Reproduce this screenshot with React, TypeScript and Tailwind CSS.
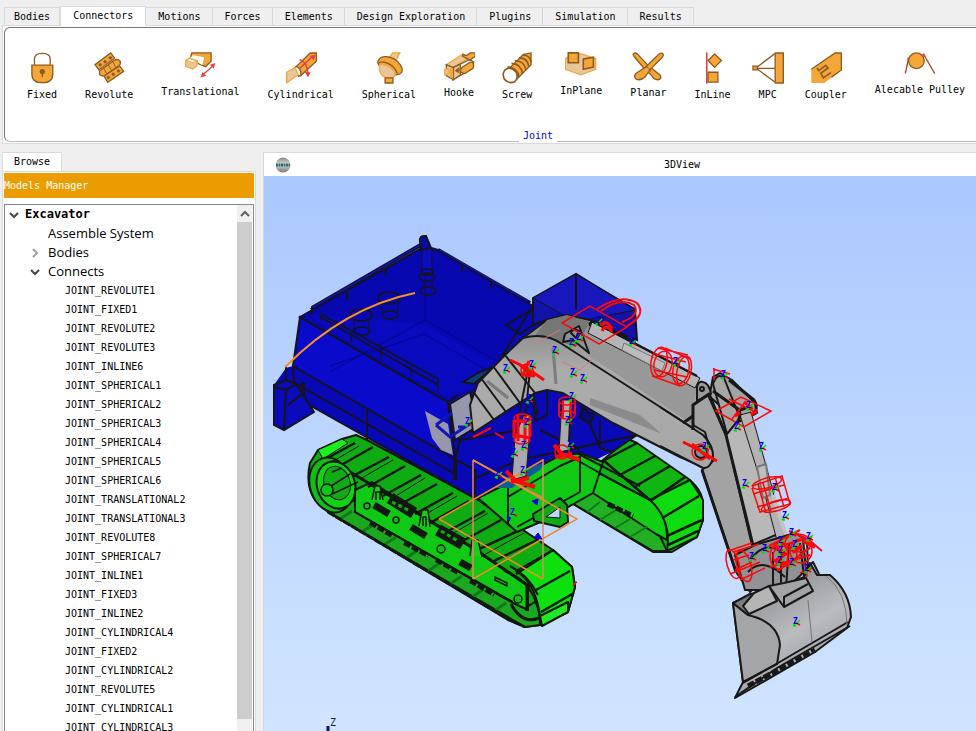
import React from 'react';

const GOLD = '#f4a638';
const BROWN = '#8d5b20';
const TAN = '#e9c59c';
const RED = '#e04545';

const tabs = ['Bodies', 'Connectors', 'Motions', 'Forces', 'Elements', 'Design Exploration', 'Plugins', 'Simulation', 'Results'];

const joints = [
  'REVOLUTE1', 'FIXED1', 'REVOLUTE2', 'REVOLUTE3', 'INLINE6', 'SPHERICAL1', 'SPHERICAL2', 'SPHERICAL3',
  'SPHERICAL4', 'SPHERICAL5', 'SPHERICAL6', 'TRANSLATIONAL2', 'TRANSLATIONAL3', 'REVOLUTE8', 'SPHERICAL7',
  'INLINE1', 'FIXED3', 'INLINE2', 'CYLINDRICAL4', 'FIXED2', 'CYLINDRICAL2', 'REVOLUTE5', 'CYLINDRICAL1',
  'CYLINDRICAL3',
];

interface Tool {
  label: string;
  height: number;
  art: React.ReactNode;
}

// Every icon is drawn on a grid of three units to the pixel, 96 units wide
const tools: Tool[] = [
  {
    label: 'Fixed',
    height: 32,
    art: (
      <>
        <path d="M26 38V20Q26 3 50 3T74 20V38" fill="none" />
        <path d="M18 39H82V66Q82 93 50 93T18 66Z" />
        <circle cx="50" cy="59" r="6" fill={BROWN} />
        <path d="M50 60V75" />
      </>
    ),
  },
  {
    label: 'Revolute',
    height: 32,
    art: (
      <>
        <path d="M54 2L66 18L18 54L6 38Z" />
        <path d="M82 42L94 58L45 92L33 72Z" />
        <path d="M20 57L64 25Q76 18 83 27Q86 36 78 42L36 71Q24 74 20 67Z" />
        <path d="M33 49L42 66M47 39L57 56M61 29L70 46" strokeWidth="3" />
        <g fill={BROWN} strokeWidth="2">
          <circle cx="22" cy="38" r="4" />
          <circle cx="37" cy="29" r="4" />
          <circle cx="53" cy="17" r="4" />
          <circle cx="47" cy="77" r="4" />
          <circle cx="62" cy="67" r="4" />
          <circle cx="78" cy="57" r="4" />
        </g>
      </>
    ),
  },
  {
    label: 'Translational',
    height: 29,
    art: (
      <>
        <path d="M24 2H83V27L66 44L46 36L20 16Z" />
        <path d="M27 9L62 15L56 39L40 30L18 18Z" fill="#fff" stroke="none" />
        <path d="M17 18L41 26L39 42L27 51L5 43V25Z" fill={TAN} stroke={GOLD} />
        <path d="M17 19L40 27L26 32L8 25Z" fill="#fff" stroke={GOLD} strokeWidth="3" />
        <path d="M56 70L92 39" stroke={RED} />
        <path d="M96 33L79 38L91 50ZM50 77L57 60L68 72Z" fill={RED} stroke="none" />
      </>
    ),
  },
  {
    label: 'Cylindrical',
    height: 32,
    art: (
      <>
        <path d="M77 2H96V27L48 72Q31 67 31 47Z" />
        <path d="M34 43Q49 48 49 69L42 74L28 51Z" fill="#fff" />
        <path d="M5 61L31 46L40 69L5 93Z" fill={TAN} stroke={GOLD} />
        <path d="M45 49L85 12M45 22Q67 27 71 69" fill="none" stroke={RED} strokeWidth="5" />
        <path d="M94 7L75 11L88 24ZM60 59L79 62L70 76Z" fill={RED} stroke="none" />
      </>
    ),
  },
  {
    label: 'Spherical',
    height: 32,
    art: (
      <>
        <path d="M60 2H82L70 26L48 18Z" fill={TAN} stroke={GOLD} />
        <path d="M15 28Q20 12 42 13Q66 15 82 36Q94 53 87 62Q82 68 70 69L30 50Q13 40 15 28Z" />
        <path d="M16 34Q26 24 46 34Q66 43 75 66" fill="none" />
        <path d="M20 38Q44 34 62 54Q70 65 66 74Q58 79 45 78Q30 77 23 63Q17 50 20 38Z" fill={TAN} stroke={GOLD} />
        <path d="M37 78H61V94H37Z" />
      </>
    ),
  },
  {
    label: 'Hooke',
    height: 30,
    art: (
      <>
        <path d="M10 38L61 5L80 17L31 47Z" fill={TAN} stroke={GOLD} />
        <path d="M31 47L82 22L94 30L90 50L31 84Z" fill="#fff" />
        <path d="M31 47L53 36V70L31 84Z" fill={TAN} />
        <path d="M10 38L32 47V84L11 72Z" fill={TAN} />
        <path d="M61 6L72 10L84 2H98V13L82 24L60 12Z" />
        <path d="M59 46L82 31Q97 27 93 48L69 64Q52 66 53 53Z" />
        <path d="M37 56L48 47V63Z" fill={BROWN} strokeWidth="2" />
        <path d="M21 47V76L31 82V50Z" stroke="none" />
        <path d="M5 52L15 50L20 64L6 70Z" fill={TAN} stroke={GOLD} />
      </>
    ),
  },
  {
    label: 'Screw',
    height: 32,
    art: (
      <>
        <path d="M69 6L92 2V38L44 87L8 66Z" />
        <path d="M65 9Q88 7 92 29M55 17Q82 17 85 43M42 25Q72 26 76 53M32 34Q61 35 66 65M20 44Q52 47 55 76" fill="none" strokeWidth="5" />
        <path d="M12 54Q26 40 45 59Q56 76 42 90Q24 98 10 82Q3 66 12 54Z" fill="#fff" strokeWidth="5" />
      </>
    ),
  },
  {
    label: 'InPlane',
    height: 28,
    art: (
      <>
        <path d="M1 19L47 4L94 19V52L48 69L1 52Z" fill={TAN} stroke={GOLD} />
        <path d="M10 2H41V32H10ZM56 21L87 15V45L56 52Z" strokeWidth="5" />
      </>
    ),
  },
  {
    label: 'Planar',
    height: 30,
    art: (
      <>
        <path d="M5 4Q12 -1 19 8L49 40L87 71Q91 84 79 84Q66 84 61 72L36 48L9 16Q1 7 5 4Z" />
        <path d="M93 3Q100 8 90 18L59 49L40 75Q29 87 14 83Q3 76 12 65L42 45L75 13Q86 0 93 3Z" />
        <path d="M42 43Q54 48 57 59" fill="none" strokeWidth="3" />
      </>
    ),
  },
  {
    label: 'InLine',
    height: 32,
    art: (
      <>
        <path d="M30 0V96" stroke={RED} strokeWidth="5" />
        <path d="M54 5L75 25L54 46L34 25ZM34 61H64V91H34Z" />
      </>
    ),
  },
  {
    label: 'MPC',
    height: 32,
    art: (
      <>
        <path d="M13 47L70 4M13 49L70 91M13 49H70" />
        <path d="M3 42H16V54H3ZM71 2H96V94H71Z" />
      </>
    ),
  },
  {
    label: 'Coupler',
    height: 32,
    art: (
      <>
        <path d="M77 2H97V54L44 94H4V52Z" stroke="none" />
        <path d="M4 52L77 2H96V54L66 76" fill="none" />
        <path d="M21 48L27 56L48 40L55 48L33 64L41 78L64 62" fill="none" strokeWidth="5" />
      </>
    ),
  },
  {
    label: 'Alecable Pulley',
    height: 27,
    art: (
      <>
        <path d="M14 19L4 65M61 8L94 65" />
        <path d="M14 19L4 65M61 8L94 65" stroke={RED} strokeWidth="3" strokeDasharray="8 12" />
        <circle cx="38" cy="26" r="24" />
        <circle cx="14" cy="20" r="4" fill={RED} stroke="none" />
        <circle cx="60" cy="9" r="5" fill={RED} stroke="none" />
      </>
    ),
  },
];

const markers = [
  [506, 369], [532, 365], [529, 399], [555, 351], [572, 343], [579, 338], [598, 321], [632, 342], [573, 373],
  [583, 379], [572, 397], [676, 362], [568, 421], [570, 445], [527, 423], [524, 446], [514, 453], [523, 471],
  [498, 474], [705, 447], [468, 422], [513, 513], [724, 375], [749, 406], [737, 427], [762, 447], [745, 484],
  [775, 488], [785, 516], [792, 533], [809, 537], [781, 541], [795, 545], [765, 549], [752, 557], [781, 551],
  [780, 561], [792, 563], [807, 569], [796, 622],
];

const ToolIcon = ({ height, art }: { height: number; art: React.ReactNode }) => (
  <svg
    width="32"
    height={height}
    viewBox={`0 0 98 ${height * 3}`}
    className="shrink-0"
    fill={GOLD}
    stroke={BROWN}
    strokeWidth="4"
    aria-hidden="true"
  >
    {art}
  </svg>
);

const Chevron = ({ d, color = '#444' }: { d: string; color?: string }) => (
  <svg width="10" height="10" viewBox="0 0 10 10" fill="none" stroke={color} strokeWidth="2" className="shrink-0" aria-hidden="true">
    <path d={d} />
  </svg>
);

const Ribbon = () => (
  <header className="pt-1.5">
    <nav className="flex items-end pl-1" role="tablist">
      {tabs.map((tab) =>
        tab === 'Connectors' ? (
          <button key={tab} role="tab" aria-selected="true" className="-mb-px h-5 border border-b-0 border-[#dadada] bg-white px-3 pb-0.5">
            {tab}
          </button>
        ) : (
          <button key={tab} role="tab" aria-selected="false" className="h-[18px] border-t border-r border-[#dadada] bg-[#efefef] pr-[11px] pl-3 first:border-l first:px-[9px]">
            {tab}
          </button>
        ),
      )}
    </nav>
    <div className="ml-0.5 overflow-hidden border border-r-0 border-[#dadada] bg-white py-px pl-px">
      <div className="-mr-24 flex h-[115px] flex-col rounded-md border border-[#b9b9b9] border-t-[#777] border-l-[#777]">
        <div className="flex items-start gap-7 pt-6 pl-[22px]">
          {tools.map((tool) => (
            <button key={tool.label} className="flex shrink-0 flex-col items-center gap-[5px] whitespace-nowrap">
              <span className="flex w-0 justify-center">
                <ToolIcon height={tool.height} art={tool.art} />
              </span>
              {tool.label}
            </button>
          ))}
        </div>
        <h2 className="mt-auto -mb-px self-center bg-white px-1 text-[#0000e0]">Joint</h2>
      </div>
    </div>
  </header>
);

const ModelTree = () => (
  <aside className="flex w-64 shrink-0 flex-col pl-0.5">
    <div role="tablist">
      <button role="tab" aria-selected="true" className="h-[19px] border border-b-0 border-[#dadada] bg-white px-[11px]">
        Browse
      </button>
    </div>
    <div className="flex min-h-0 flex-1 flex-col border border-b-0 border-[#dadada] bg-white px-px pt-px">
      <h1 className="flex h-[25px] shrink-0 items-center bg-[#eb9c00] text-white">Models Manager</h1>
      <div className="mt-1.5 flex min-h-0 flex-1 border border-b-0 border-[#828790]">
        <ul className="min-w-0 flex-1 overflow-hidden leading-[19px]" role="tree">
          <li className="flex items-center gap-1.5 pl-1 text-[12px] font-bold">
            <Chevron d="M1 3L5 7L9 3" />
            Excavator
          </li>
          <li className="pl-[43px] font-[Open_Sans,Noto_Sans,sans-serif] text-[13px]">Assemble System</li>
          <li className="flex items-center gap-2 pl-[25px] font-[Open_Sans,Noto_Sans,sans-serif] text-[13px]">
            <Chevron d="M3 1L7 5L3 9" color="#a0a0a0" />
            Bodies
          </li>
          <li className="flex items-center gap-2 pl-[25px] font-[Open_Sans,Noto_Sans,sans-serif] text-[13px]">
            <Chevron d="M1 3L5 7L9 3" />
            Connects
          </li>
          {joints.map((joint) => (
            <li key={joint} className="pl-[60px]">{`JOINT_${joint}`}</li>
          ))}
        </ul>
        <div className="mr-px flex w-[15px] shrink-0 flex-col bg-[#f0f0f0]">
          <button aria-label="Scroll up" className="flex h-[17px] shrink-0 items-center justify-center">
            <Chevron d="M1 7L5 3L9 7" color="#606060" />
          </button>
          <div className="mb-3 flex-1 bg-[#cdcdcd]" />
        </div>
      </div>
    </div>
  </aside>
);

const Marker = ({ x, y }: { x: number; y: number }) => (
  <g>
    <path d={`M${x} ${y + 1}l-3 3m2-2v3`} stroke="#00e000" strokeWidth="1.5" />
    <path d={`M${x} ${y + 1}l4 2`} stroke="#f00" strokeWidth="1.5" />
    <path d={`M${x + 1} ${y + 1}l3-3`} stroke="#00e000" strokeWidth="1.5" />
    <text x={x - 3} y={y + 2} fill="#0000ee" stroke="none" fontSize="8" fontWeight="bold">Z</text>
  </g>
);

const Body = () => (
  <g stroke="#14141a" strokeWidth="2">
    <path d="M300 317L425 246L438 250L533 306V298L576 274L635 308L637 435L612 452L575 470L475 498L295 397L274 425V385L286 368L293 366Z" fill="#0909b8" stroke="none" />
    <path d="M300 317L448 402L455 459L295 372L293 366Z" fill="#0a0acb" />
    <path d="M300 317L425 246L438 250L533 306L495 368L448 402Z" fill="#0808b0" />
    <path d="M306 313L424 324L514 375L448 398L345 340Z" fill="#0909bd" stroke="none" />
    <path d="M425 252V320L330 372M425 320L516 372M330 366L424 334L490 372" fill="none" stroke="#05058c" strokeWidth="1" />
    <path d="M312 308L424 243M438 250L530 303" fill="none" stroke="#10104a" strokeWidth="4" />
    <path d="M310 309L424 243M440 250L528 301" fill="none" stroke="#1717c4" strokeWidth="1" />
    <path d="M533 298L576 274L635 310L637 340L590 322L567 315L547 320L533 325Z" fill="#1212a8" />
    <path d="M533 298L576 322L635 310L576 274Z" fill="#1717bd" strokeWidth="1" />
    <path d="M576 274V310M506 325L533 309V325L520 334Z" fill="none" />
    <path d="M293 366L455 459L475 470V498L295 397Z" fill="#0808b4" />
    <path d="M295 383L455 474M367 410V440M455 459L460 440L520 430V500M475 478L520 460L637 435" fill="none" />
    <path d="M455 459V480M303 382V396" strokeWidth="4" />
    <path d="M274 385L286 380L296 384L314 412L284 430L274 425Z" fill="#0b0bbc" />
    <path d="M286 366V380M274 387L286 390L296 384M286 390L284 430M288 405L302 394" fill="none" />
    <path d="M321 313V318L323 315L438 379V391M351 331V342M381 348V359M411 366V376M322 318L438 385" fill="none" strokeWidth="1.5" />
    <path d="M347 292v8M386 269v6M462 264v8M491 281v8M312 307v8" fill="none" />
    <path d="M422 248V275H432V248" fill="#0b0bc2" strokeWidth="1" />
    <path d="M420 242Q419 235 426 236L431 248L421 250Z" fill="#0a0aa8" />
    <g fill="none" strokeWidth="1.5">
      <ellipse cx="427" cy="277" rx="8" ry="4" />
      <ellipse cx="427" cy="272" rx="6" ry="3" />
      <ellipse cx="428" cy="291" rx="8" ry="4" />
      <ellipse cx="389" cy="298" rx="11" ry="6" />
      <ellipse cx="390" cy="315" rx="8" ry="4" />
      <ellipse cx="361" cy="315" rx="11" ry="6" />
      <ellipse cx="362" cy="331" rx="8" ry="4" />
      <path d="M382 302V312M398 302V312M354 320V330M369 320V330M424 280V290M432 280V290" strokeWidth="1" />
    </g>
    <path d="M425 411L448 424L453 455L441 450L432 438Z" fill="#9696ad" stroke="none" />
    <path d="M450 404L470 392L478 426L455 440Z" fill="#9696ad" />
    <path d="M436 425L452 413M436 425L450 437L476 420M458 427h8" stroke="#1414b8" strokeWidth="3" fill="none" />
    <path d="M463 382L478 373L495 366L474 384Z" fill="#0a3f7a" />
    <path d="M533 393L535 421L547 415V392M582 405L600 448L612 452L637 435M600 448V420M540 430L580 450" fill="none" />
    <path d="M582 408L594 415L590 424L580 418Z" fill="#090978" />
  </g>
);

const Track = () => (
  <g stroke="#101810" strokeWidth="2" strokeLinejoin="round">
    <path d="M628 439L637 443L683 475Q703 488 703 505V520L697 537L672 552H653L570 502L593 470L603 460Z" fill="#0fb612" />
    <path d="M570 502L593 492L660 536L667 551H653Z" fill="#22ae25" />
    <path d="M593 470L650 500Q668 514 667 540L656 534L593 493Z" fill="#10ce12" />
    <path d="M650 500Q672 520 667 551L697 537L703 520V500L690 480Z" fill="#0edb10" />
    <path d="M603 460L650 500M637 443L603 461M655 456L618 476M670 466L636 486M685 477L652 500M699 496L664 517M702 520L667 536M668 545L698 531" fill="none" strokeWidth="2.5" />
    <path d="M587 512L600 502M600 520L616 510M615 528L630 519M630 537L647 527" stroke="#0b800e" />
    <path d="M608 504l25 12" strokeWidth="5" strokeDasharray="7 2" />

    <path d="M342 439L318 450L310 463Q305 485 315 500L328 512L508 620L525 627L540 625L568 612L575 587L572 567L553 550L475 498L367 440L356 435Z" fill="#0fab13" />
    <path d="M328 512L355 500L528 606L539 600L540 625L525 627Z" fill="#1ca720" />
    <path d="M340 519L352 511M362 532L374 524M384 545L396 537M406 558L418 550M428 571L440 563M450 584L462 576M472 597L484 589M494 611L506 603" stroke="#0f7a14" strokeWidth="3" />
    <path d="M355 490L372 482L528 585V610L513 603L355 512Z" fill="#10c914" />
    <path d="M318 450L342 439L348 443L323 459Z" fill="#1cee20" strokeWidth="1" />
    <path d="M516 571Q538 584 541 625L568 612L575 587L572 567L553 550Z" fill="#0ee010" />
    <path d="M540 616L568 602L568 612L542 626Z" fill="#20e824" />
    <path d="M355 443L322 461M373 447L336 468M389 457L351 477M405 466L368 487M421 475L383 496M437 484L399 505M453 493L415 514M469 501L430 523M485 511L446 532M501 520L461 542M520 530L477 550M537 540L492 562M553 550L516 574M570 571L536 590M574 593L541 612" fill="none" strokeWidth="2.5" />
    <path d="M359 446L330 463M393 460L360 479M425 478L391 499M457 496L421 517M488 513L452 534M524 533L482 556" fill="none" strokeWidth="1" />
    <path d="M322 459L350 472L390 496L473 548L530 587" fill="none" strokeWidth="3" />
    <path d="M328 512L508 619L525 627" fill="none" strokeWidth="3" strokeDasharray="8 1" />
    <ellipse cx="331" cy="485" rx="21" ry="28" transform="rotate(-18 331 485)" fill="#12bd18" />
    <ellipse cx="336" cy="485" rx="19" ry="24" transform="rotate(-18 336 485)" fill="#0fd413" />
    <ellipse cx="337" cy="483" rx="13" ry="17" transform="rotate(-18 337 483)" fill="#12ab18" strokeWidth="1" />
    <path d="M325 490L350 474M330 495L358 482M332 472L342 468" strokeWidth="1.5" />
    <circle cx="327" cy="490" r="6" fill="#12c418" strokeWidth="1.5" />
    <path d="M355 488V512L513 602" fill="none" />
    <path d="M390 498L414 513M438 530L463 544" strokeWidth="12" />
    <path d="M392 502L410 511M441 531L458 541" stroke="#14a81a" strokeWidth="3" strokeDasharray="4 3" />
    <path d="M374 505L389 514M411 527L426 536M460 562L471 568" strokeWidth="7" />
    <path d="M370 523l22 13M404 543l24 13M436 560l22 13M470 581l24 14" strokeWidth="4" strokeDasharray="7 2" />
    <path d="M372 500L375 486H380L383 500M419 526L422 510H428L430 527M470 556L472 540H478L482 557M376 500V492H380V500M423 526V517H426V527" fill="#1acc20" strokeWidth="1.5" />
    <g fill="#10be16" strokeWidth="1.5">
      <circle cx="367" cy="506" r="3" />
      <circle cx="396" cy="520" r="3" />
      <circle cx="441" cy="549" r="4" />
      <circle cx="518" cy="599" r="4" />
      <path d="M495 577L507 583V586L495 580Z" />
    </g>
    <path d="M504 571Q534 580 540 618M510 566Q528 575 538 595" fill="none" />
    <path d="M527 585V611M511 604Q522 625 539 618" fill="none" strokeWidth="3" />
  </g>
);

const Chassis = () => (
  <g stroke="#101810" strokeWidth="2" strokeLinejoin="round">
    <path d="M478 498L508 483L557 457L580 453L603 462L593 493L545 520L517 532Z" fill="#10c914" />
    <path d="M508 483V525M508 497L560 466L580 457V492M517 527L580 492" fill="none" />
    <path d="M575 452L640 486M575 459L628 489" fill="none" />
    <path d="M533 514L560 498L567 505L568 522L560 527L534 521Z" fill="#10aa18" />
    <path d="M546 517L560 507V518Z" fill="#bdd6fb" strokeWidth="1" />
    <path d="M495 488L510 475L545 462L540 470L512 488Z" fill="#0c5c98" stroke="none" />
  </g>
);

const Boom = () => (
  <g stroke="#181818" strokeWidth="2" strokeLinejoin="round">
    <path d="M515 436L524 415H531L526 476L512 480Z" fill="#a8a8ae" strokeWidth="1" />
    <path d="M562 400H572L569 450L559 452Z" fill="#a8a8ae" strokeWidth="1" />
    <path d="M473 433L470 405L478 383L505 355L523 338L547 320L567 315L590 320L697 383L705 430Q719 452 713 461L707 468L680 457L613 423L563 393L547 390L535 393L513 407Z" fill="url(#boomShade)" />
    <path d="M547 320L567 315L590 322L576 347L555 340L535 336Z" fill="#777" stroke="none" />
    <path d="M590 322L697 383L693 425L588 355Z" fill="#989898" stroke="none" />
    <path d="M523 338Q545 332 562 344L693 428" fill="none" />
    <path d="M590 398L640 415L662 434L590 405Z" fill="#8b8b8d" stroke="none" />
    <path d="M505 355L535 393M493 366L520 403M481 378L506 412M472 390L494 420" fill="none" />
    <path d="M487 381L508 398M553 348L556 384" stroke="#7c7c7c" strokeWidth="3" />
    <path d="M563 342L565 334L579 326L589 353L573 340Z" fill="#929292" />
    <path d="M592 322L700 378L695 388L588 333Z" fill="#b5b5b8" strokeWidth="1" />
    <path d="M592 321L697 376" strokeWidth="2.5" />
    <path d="M624 343L665 363L662 371L622 350Z" fill="#bcbcbf" stroke="#777" strokeWidth="1" />
    <path d="M571 333Q573 327 579 331L576 338ZM590 326Q588 320 600 321" fill="none" />
    <path d="M518 420L528 370M530 370L525 420M571 397L569 442" fill="none" />
    <path d="M533 394L537 415" strokeWidth="3" />
  </g>
);

const Stick = () => (
  <g stroke="#181818" strokeWidth="2" strokeLinejoin="round">
    <path d="M693 405L710 393L713 377L720 373L732 380L755 403L757 413L750 417L778 533L780 560L750 592L736 572L702 470L713 461L705 432L693 425Z" fill="#a3a3a3" />
    <path d="M708 395L726 435L752 545L778 534L750 417L738 422Z" fill="#b7b8b7" />
    <path d="M697 401V387Q698 381 703 382Q709 383 711 394Z" fill="#999" />
    <path d="M713 384Q717 372 724 378L740 418L727 434Z" fill="#a6a6a6" />
    <path d="M726 435L759 570L748 590M702 470L736 572M693 430V405L709 394L726 435" fill="none" strokeWidth="3" />
    <path d="M740 415L751 412L770 480L787 545L780 552L765 495Z" fill="#b3b3b5" strokeWidth="1" />
    <path d="M757 467L766 464L770 495L763 498Z" fill="#bdbdc0" stroke="#777" />
    <path d="M773 495L789 545" stroke="#c2c2c6" strokeWidth="4" />
    <circle cx="702" cy="389" r="2" />
    <path d="M713 391L738 409Q742 414 738 421M729 380L754 400Q758 406 755 412M740 410L752 406" fill="none" strokeWidth="3" />
    <path d="M660 414L703 443Q714 450 713 458Q710 469 703 468L660 446Z" fill="#a8a8a9" stroke="none" />
    <path d="M660 407L703 435Q714 446 713 458Q710 469 703 468L660 446" fill="none" />
    <path d="M683 423L693 416" fill="none" strokeWidth="3" />
    <circle cx="701" cy="452" r="6" fill="#8e8e8e" />
    <path d="M735 555L755 545L795 533L803 538L806 570L785 590L745 590Z" fill="#929296" />
    <path d="M752 558Q765 540 783 553M748 572Q763 556 785 577M773 552V586M781 548V588M789 543L786 590M800 543L804 576M807 541L808 570" fill="none" />
  </g>
);

const Bucket = () => (
  <g stroke="#181818" strokeWidth="2" strokeLinejoin="round">
    <path d="M733 603L760 592L779 588L804 577L810 563L817 575L830 575Q850 592 851 617L847 628L815 652L735 698L743 682Z" fill="url(#bucketShade)" />
    <path d="M733 603L748 615Q778 622 780 645L777 664L743 682Z" fill="#a4a5a7" />
    <path d="M733 603L750 594L764 592L748 615Z" fill="#7c7c7e" />
    <path d="M743 606L754 593L769 586L777 601L749 614Z" fill="#b4b4b5" />
    <path d="M769 586L784 583L806 578L813 591L784 607Z" fill="#a3a4a6" />
    <path d="M784 597L808 584M784 607V596M806 570L813 562L819 574" fill="none" />
    <path d="M735 697L777 668L850 626M743 683L778 663L848 622" fill="none" />
    <path d="M748 686L815 650" fill="none" strokeWidth="5" strokeDasharray="7 2" />
    <path d="M808 600L812 642M826 576Q847 592 847 625" fill="none" stroke="#777" strokeWidth="1" />
  </g>
);

const JointGlyphs = () => (
  <g fill="none" stroke="#fb0808" strokeWidth="1.5">
    <path d="M562 323L590 306L627 327L599 344Z" />
    <path d="M597 309Q621 293 637 303Q647 315 627 326M601 311Q620 297 634 305Q641 315 622 322" strokeWidth="2" />
    <path d="M601 326Q606 318 612 329M602 331Q606 323 612 332" strokeWidth="3" />
    <path d="M534 344L560 330M562 362L580 370L593 359" stroke="#dc7777" strokeWidth="1" />
    <g>
      <ellipse cx="659" cy="362" rx="8" ry="15" transform="rotate(12 659 362)" />
      <ellipse cx="684" cy="371" rx="7" ry="15" transform="rotate(12 684 371)" />
      <ellipse cx="663" cy="364" rx="9" ry="13" transform="rotate(12 663 364)" />
      <ellipse cx="681" cy="370" rx="8" ry="14" transform="rotate(12 681 370)" />
      <path d="M658 348L688 355M652 376L680 386M665 348L690 359M654 370L687 377M655 354L686 362" />
    </g>
    <path d="M510 360L527 368L544 380M520 365L530 374M529 361L523 375L535 376" strokeWidth="3" />
    <circle cx="527" cy="370" r="6" />
    <path d="M506 471L516 481L535 487M511 482L529 478" strokeWidth="4" />
    <path d="M554 445L562 454L580 460M555 457L572 454" strokeWidth="4" />
    <circle cx="562" cy="452" r="7" />
    <path d="M683 442L697 449L717 461M692 444L710 459" strokeWidth="3" />
    <circle cx="700" cy="452" r="8" />
    <g>
      <path d="M514 420V438M518 415V441M525 416V442M530 417V437M513 422L530 420M514 435L530 438" strokeWidth="3" />
      <ellipse cx="522" cy="418" rx="8" ry="4" />
      <ellipse cx="522" cy="440" rx="8" ry="4" />
      <path d="M559 402V416M563 400V418M571 399V417M575 401V414" strokeWidth="2" />
      <ellipse cx="567" cy="401" rx="8" ry="4" />
      <ellipse cx="567" cy="415" rx="8" ry="4" />
    </g>
    <path d="M473 437L491 428M495 433L504 438" strokeWidth="2" />
    <path d="M716 411L741 397L771 411L744 427ZM713 369L730 374M714 368V380M729 399L757 413M732 419L746 401" />
    <path d="M744 402l8 6M735 416l5-3M751 415l6-5" strokeWidth="3" />
    <g>
      <path d="M752 488L760 512L790 504L782 476L752 486M758 484L766 513M763 483L771 511M775 477L784 507M753 494L784 485M757 507L789 498" />
      <ellipse cx="767" cy="483" rx="15" ry="5" transform="rotate(-15 767 483)" />
      <ellipse cx="776" cy="506" rx="15" ry="5" transform="rotate(-15 776 506)" />
    </g>
    <g>
      <ellipse cx="733" cy="564" rx="6" ry="15" transform="rotate(-15 733 564)" />
      <ellipse cx="744" cy="566" rx="7" ry="16" transform="rotate(-15 744 566)" />
      <path d="M728 551L752 543M733 552L759 544M730 574L760 562M740 580L765 568M733 560L749 555M735 570L752 562" />
      <ellipse cx="779" cy="556" rx="9" ry="13" />
      <ellipse cx="785" cy="556" rx="12" ry="10" />
      <ellipse cx="798" cy="543" rx="13" ry="9" />
      <ellipse cx="801" cy="551" rx="11" ry="12" />
      <path d="M769 546L800 530M770 567L810 555M773 548L812 537M777 571L810 548M789 531L808 539L822 551" strokeWidth="2" />
      <path d="M775 545l10 9-8 6 13 6M792 552l10-6M803 541l12 6" strokeWidth="4" />
      <path d="M800 573L812 568M806 565L807 577" />
    </g>
    <path d="M573 586l2-3 2-1" />
  </g>
);

const Scene = () => (
  <svg
    viewBox="264 176 712 555"
    preserveAspectRatio="xMinYMin meet"
    className="h-full w-full"
    fill="none"
    role="img"
    aria-label="Excavator assembly"
  >
    <defs>
      <linearGradient id="boomShade" x1="0" y1="0" x2="0" y2="1">
        <stop offset="0" stopColor="#858585" />
        <stop offset="0.35" stopColor="#ababab" />
        <stop offset="1" stopColor="#a8a8a9" />
      </linearGradient>
      <linearGradient id="bucketShade" x1="0.3" y1="0" x2="0.8" y2="1">
        <stop offset="0" stopColor="#858588" />
        <stop offset="0.5" stopColor="#bbbcbf" />
        <stop offset="1" stopColor="#888a8e" />
      </linearGradient>
    </defs>
    <Track />
    <Body />
    <Chassis />
    <Boom />
    <Stick />
    <Bucket />
    <path d="M285 367Q345 307 415 293" stroke="#f7941d" strokeWidth="2" />
    <g strokeWidth="1.5">
      <path d="M473 460V579M473 460L543 498M543 459V579" stroke="#e5875c" />
      <path d="M439 519L508 480L543 460M439 519L543 579M473 579L577 519L473 460" stroke="#f08a24" />
    </g>
    <path d="M538 499l-6 2 5 4ZM538 533l-4 5 8 1ZM507 517l4 0-2 4Z" fill="#0000e6" stroke="#0000e6" />
    <JointGlyphs />
    {markers.map(([x, y]) => (
      <Marker key={`${x}-${y}`} x={x} y={y} />
    ))}
    <path d="M328 726V734" stroke="#10107c" strokeWidth="3" />
    <text x="330" y="726" fill="#202030" fontSize="10">Z</text>
  </svg>
);

const Viewport = () => (
  <main className="flex min-w-0 flex-1 flex-col overflow-hidden border-t border-l border-[#dadada]">
    <div className="-mr-31 flex h-[23px] shrink-0 items-center bg-white pl-[11px]">
      <svg width="16" height="16" viewBox="0 0 16 16" aria-hidden="true">
        <defs>
          <linearGradient id="ball" x1="0" y1="0" x2="0" y2="1">
            <stop offset="0" stopColor="#8a8a8a" />
            <stop offset="0.45" stopColor="#d8d8d8" />
            <stop offset="1" stopColor="#777" />
          </linearGradient>
        </defs>
        <circle cx="8" cy="8" r="7.5" fill="url(#ball)" />
        <path d="M1 8H15" stroke="#2f7078" strokeWidth="3" strokeDasharray="2 0.5" />
      </svg>
      <h2 className="flex-1 pr-[27px] text-center">3DView</h2>
    </div>
    <div className="min-h-0 flex-1 bg-linear-to-b from-[#abc8ff] to-[#d0e5ff]">
      <Scene />
    </div>
  </main>
);

const App = () => {
  return (
    <div className="flex h-screen flex-col overflow-hidden bg-[#efefef] font-[DejaVu_Sans_Mono,Liberation_Mono,monospace] text-[10px] leading-3 text-black">
      <Ribbon />
      <div className="mt-2 flex min-h-0 flex-1 gap-[7px]">
        <ModelTree />
        <Viewport />
      </div>
    </div>
  );
};

export default App;
